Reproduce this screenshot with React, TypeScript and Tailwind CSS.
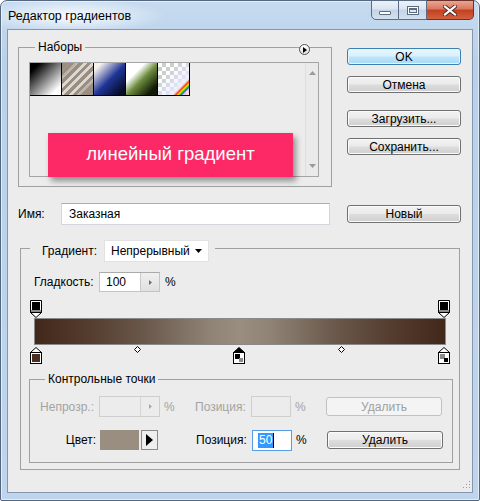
function TopStop({ className }: { className: string }) {
  return (
    <svg width="12" height="18" viewBox="0 0 12 18" className={className}>
      <path d="M0.5 0.5H11.5V12.5L6 17.5L0.5 12.5Z" fill="#fff" stroke="#000" />
      <rect x="2" y="2" width="8" height="8" fill="#000" />
      <rect x="1" y="10" width="10" height="2.5" fill="#8c8c8c" />
      <path d="M0.5 12.5H11.5" stroke="#000" />
    </svg>
  );
}

function BottomStop({
  className,
  selected,
  kind,
}: {
  className: string;
  selected?: boolean;
  kind: "color" | "fg" | "bg";
}) {
  return (
    <svg width="12" height="17" viewBox="0 0 12 17" className={className}>
      <path d="M0.5 5.5L6 0.5L11.5 5.5Z" fill={selected ? "#000" : "#fff"} stroke="#000" />
      <rect x="0.5" y="5.5" width="11" height="11" fill="#fff" stroke="#000" />
      {kind === "color" && <rect x="2" y="7" width="8" height="8" fill="#4a2e1f" />}
      {kind === "fg" && (
        <>
          <rect x="2" y="7" width="5" height="5" fill="#000" />
          <rect x="6" y="11" width="4" height="4" fill="#8c8c8c" />
        </>
      )}
      {kind === "bg" && (
        <>
          <rect x="2" y="7" width="5" height="5" fill="#8c8c8c" />
          <rect x="6" y="11" width="4" height="4" fill="#000" />
        </>
      )}
    </svg>
  );
}

function Diamond({ className }: { className: string }) {
  return (
    <svg width="7" height="7" viewBox="0 0 7 7" className={className}>
      <path d="M3.5 0.5L6.5 3.5L3.5 6.5L0.5 3.5Z" fill="#fff" stroke="#000" />
    </svg>
  );
}

const btn =
  "flex items-center justify-center rounded-[3px] border border-[#707070] bg-[linear-gradient(#f2f2f2_0%,#ebebeb_48%,#dddddd_52%,#cfcfcf_100%)] shadow-[inset_0_0_0_1px_#fbfbfb] text-black";

export default function App() {
  return (
    <div className="w-[480px] h-[501px] font-['Liberation_Sans',Arial,sans-serif] text-[12px] leading-[14px] text-black">
      <div className="w-full h-full flex flex-col rounded-t-[7px] rounded-b-[2px] border border-[#55677f] bg-[linear-gradient(180deg,#c6dbf0,#b9d1ea_60px,#bed5ed)] shadow-[inset_0_0_0_1px_rgba(255,255,255,0.55)]">
        {/* title bar */}
        <div className="h-[28px] flex items-start justify-between bg-[radial-gradient(ellipse_95px_17px_at_70px_15px,rgba(255,255,255,0.9),rgba(255,255,255,0))] rounded-t-[6px]">
          <div className="pl-[7px] pt-[8px] text-[12.5px]">Редактор градиентов</div>
          <div className="flex mr-[5px] -mt-px">
            <div className="w-[28px] h-[20px] rounded-bl-[5px] border border-[#5a6c84] bg-[linear-gradient(#edf2f8_0%,#dbe5f1_45%,#c4d4e7_50%,#d3e0ef_100%)] flex items-end justify-center pb-[4px]">
              <div className="w-[12px] h-[4px] border border-[#5c6c80] bg-white rounded-[1px]" />
            </div>
            <div className="w-[28px] h-[20px] border-y border-r border-[#5a6c84] bg-[linear-gradient(#edf2f8_0%,#dbe5f1_45%,#c4d4e7_50%,#d3e0ef_100%)] flex items-center justify-center">
              <div className="w-[12px] h-[9px] border border-[#5c6c80] bg-white p-[1px]">
                <div className="w-full h-full border border-[#5c6c80] border-t-2 bg-[#dfe7f1]" />
              </div>
            </div>
            <div className="w-[47px] h-[20px] rounded-br-[5px] border-y border-r border-[#6a3328] bg-[linear-gradient(#e9a593_0%,#d9765e_45%,#c4401f_50%,#d3603f_100%)] flex items-center justify-center">
              <svg width="14" height="11" viewBox="0 0 14 11">
                <path d="M2 1.5L12 9.5M12 1.5L2 9.5" stroke="#4a2a24" strokeWidth="4" strokeLinecap="square" />
                <path d="M2 1.5L12 9.5M12 1.5L2 9.5" stroke="#fff" strokeWidth="2.2" strokeLinecap="square" />
              </svg>
            </div>
          </div>
        </div>

        {/* client area */}
        <div className="relative mx-[6px] h-[464px] border border-[#8597ae] bg-[#ececec]">
          <div className="flex pl-[10px] pt-[17px]">
            <div className="w-[314px]">
              {/* Наборы */}
              <div className="relative h-[140px] border border-[#a0a0a0] pl-[10px] pt-[14px]">
                <div className="absolute left-[16px] -top-[8px] bg-[#ececec] px-[3px]">Наборы</div>
                <div className="absolute left-[280px] -top-[4px] w-[11px] h-[11px] rounded-full border border-[#505050] bg-[linear-gradient(#ffffff,#e2e2e2)] flex items-center justify-center">
                  <svg width="5" height="6" viewBox="0 0 5 6" className="ml-px">
                    <path d="M0 0L4 3L0 6Z" fill="#000" />
                  </svg>
                </div>
                <div className="w-[290px] h-[115px] border border-[#a5a5a5] flex">
                  <div className="flex-1">
                    <div className="flex">
                      <div className="w-[32px] h-[33px] border-r border-b border-black bg-[linear-gradient(135deg,#000_15%,#fff_85%)]" />
                      <div className="w-[32px] h-[33px] border-r border-b border-black bg-[linear-gradient(135deg,#9a8e80_10%,rgba(154,142,128,0)_35%,rgba(154,142,128,0)_65%,#9a8e80_90%),repeating-linear-gradient(135deg,#9a8e80_0px,#9a8e80_3px,#dcd8d3_3px,#dcd8d3_6px)]" />
                      <div className="w-[32px] h-[33px] border-r border-b border-black bg-[linear-gradient(135deg,#f8f2ec_12%,#1f3596_52%,#060b26_90%)]" />
                      <div className="w-[32px] h-[33px] border-r border-b border-black bg-[linear-gradient(135deg,#fff_30%,#6e8d3f_52%,#111805_85%)]" />
                      <div className="w-[32px] h-[33px] border-r border-b border-black bg-[linear-gradient(135deg,rgba(255,255,255,0)_30%,rgba(232,236,255,0.9)_74%,#ff3300_79%,#ffee00_82%,#22cc22_85%,#2255ff_88%,rgba(255,190,200,0.6)_90%),conic-gradient(#cdcdcd_25%,#fff_0_50%,#cdcdcd_0_75%,#fff_0)] bg-[length:100%_100%,8px_8px]" />
                    </div>
                  </div>
                  <div className="w-[13px] border-l border-[#dedede] bg-[#eaeaea] flex flex-col items-center justify-between py-[8px]">
                    <svg width="7" height="4" viewBox="0 0 7 4">
                      <path d="M0 4L3.5 0L7 4Z" fill="#9a9a9a" />
                    </svg>
                    <svg width="7" height="4" viewBox="0 0 7 4">
                      <path d="M0 0L3.5 4L7 0Z" fill="#9a9a9a" />
                    </svg>
                  </div>
                </div>
                <div className="absolute left-[29px] top-[85px] w-[245px] h-[44px] bg-[#fd2966] shadow-[3px_4px_6px_rgba(0,0,0,0.4)] flex items-center justify-center text-white text-[18.5px] leading-[22px] pb-[3px]">
                  линейный градиент
                </div>
              </div>

              {/* Имя */}
              <div className="flex items-center mt-[16px]">
                <div className="w-[43px]">Имя:</div>
                <div className="w-[269px] h-[22px] border border-[#d2d6dc] border-t-[#abadb3] bg-white flex items-center pl-[7px]">
                  Заказная
                </div>
              </div>
            </div>

            {/* buttons */}
            <div className="ml-[15px] w-[114px] pt-px flex flex-col">
              <div className="h-[17px] flex items-center justify-center rounded-[3px] border border-[#3c7fb1] bg-[linear-gradient(#eaf6fd_0%,#d9f0fc_48%,#bee6fd_52%,#a7d9f5_100%)] shadow-[inset_0_0_0_1px_#e6f5fd]">
                OK
              </div>
              <div className={`${btn} h-[17px] mt-[11px]`}>Отмена</div>
              <div className={`${btn} h-[17px] mt-[17px]`}>Загрузить...</div>
              <div className={`${btn} h-[17px] mt-[11px]`}>Сохранить...</div>
              <div className={`${btn} h-[18px] mt-[50px]`}>Новый</div>
            </div>
          </div>

          {/* Градиент group */}
          <div className="relative ml-[12px] mt-[23px] w-[440px] h-[222px] border border-[#a0a0a0] pl-[13px] pt-[23px]">
            <div className="absolute left-[9px] -top-[9px] bg-[#ececec] flex items-center pl-[12px] pr-[6px]">
              <div className="w-[62px]">Градиент:</div>
              <div className="w-[105px] h-[22px] border border-[#e2e2e2] bg-white flex items-center justify-between pl-[6px] pr-[6px]">
                <span>Непрерывный</span>
                <svg width="7" height="4" viewBox="0 0 7 4">
                  <path d="M0 0L3.5 4L7 0Z" fill="#000" />
                </svg>
              </div>
            </div>

            {/* Гладкость */}
            <div className="flex items-center h-[20px]">
              <div className="w-[65px]">Гладкость:</div>
              <div className="w-[61px] h-[20px] border border-[#c4c4c4] border-t-[#aaaaaa] flex">
                <div className="w-[40px] bg-white pl-[6px] flex items-center">100</div>
                <div className="flex-1 border-l border-[#c9c9c9] bg-[linear-gradient(#f0f0f0,#e0e0e0)] flex items-center justify-center">
                  <svg width="3" height="5" viewBox="0 0 3 5">
                    <path d="M0 0L3 2.5L0 5Z" fill="#5a6f92" />
                  </svg>
                </div>
              </div>
              <div className="ml-[5px]">%</div>
            </div>

            {/* gradient bar with stops */}
            <div className="relative -ml-[4px] mt-[8px] w-[420px] h-[64px] pt-[18px] pl-[4px]">
              <TopStop className="absolute left-0 top-0" />
              <TopStop className="absolute left-[408px] top-0" />
              <div className="w-[412px] h-[27px] border border-[#8a8a8a] bg-[linear-gradient(90deg,#41281b,#523a2c_12%,#6c5b4e_28%,#8e8274_42%,#9a8e80_50%,#8e8274_58%,#6c5b4e_72%,#523a2c_88%,#41281b)]" />
              <BottomStop className="absolute left-0 top-[47px]" kind="color" />
              <BottomStop className="absolute left-[203px] top-[47px]" kind="fg" selected />
              <BottomStop className="absolute left-[408px] top-[47px]" kind="bg" />
              <Diamond className="absolute left-[104px] top-[46px]" />
              <Diamond className="absolute left-[308px] top-[46px]" />
            </div>

            {/* Контрольные точки */}
            <div className="relative -ml-[5px] mt-[15px] w-[424px] h-[84px] border border-[#a0a0a0] pt-[16px]">
              <div className="absolute left-[15px] -top-[8px] bg-[#ececec] px-[3px]">Контрольные точки</div>

              <div className="flex items-center h-[21px] text-[#a3a3a3]">
                <div className="w-[64px] text-right">Непрозр.:</div>
                <div className="ml-[5px] w-[61px] h-[21px] border border-[#cfcfcf] flex">
                  <div className="w-[40px]" />
                  <div className="flex-1 border-l border-[#d6d6d6] flex items-center justify-center">
                    <svg width="3" height="5" viewBox="0 0 3 5">
                      <path d="M0 0L3 2.5L0 5Z" fill="#a8a8a8" />
                    </svg>
                  </div>
                </div>
                <div className="w-[35px] pl-[4px]">%</div>
                <div className="w-[56px]">Позиция:</div>
                <div className="w-[40px] h-[21px] border border-[#cfcfcf]" />
                <div className="w-[35px] pl-[4px]">%</div>
                <div className="w-[116px] h-[19px] rounded-[3px] border border-[#bfc2c4] bg-[#f4f4f4] flex items-center justify-center text-[#a0a0a0]">
                  Удалить
                </div>
              </div>

              <div className="flex items-center h-[20px] mt-[13px]">
                <div className="w-[66px] text-right">Цвет:</div>
                <div className="ml-[4px] w-[39px] h-[20px] bg-[#9a8e80]" />
                <div className="ml-[2px] w-[17px] h-[20px] border border-[#8a8a8a] bg-[#eeeeee] flex items-center justify-center">
                  <svg width="7" height="12" viewBox="0 0 7 12">
                    <path d="M0 0L7 6L0 12Z" fill="#000" />
                  </svg>
                </div>
                <div className="w-[38px]" />
                <div className="w-[56px]">Позиция:</div>
                <div className="w-[40px] h-[21px] border border-[#569de5] bg-white flex items-center pl-[5px]">
                  <span className="bg-[#3399ff] text-white px-px leading-[15px]">50</span>
                  <span className="w-px h-[15px] bg-black" />
                </div>
                <div className="w-[35px] pl-[4px]">%</div>
                <div className={`${btn} w-[116px] h-[18px]`}>Удалить</div>
              </div>
            </div>
          </div>

          {/* resize grip */}
          <svg width="10" height="10" viewBox="0 0 10 10" className="absolute right-[1px] bottom-[1px]">
            <rect x="8" y="0" width="1" height="1" fill="#9a9a9a" />
            <rect x="5" y="3" width="1" height="1" fill="#9a9a9a" />
            <rect x="8" y="3" width="1" height="1" fill="#9a9a9a" />
            <rect x="2" y="6" width="1" height="1" fill="#9a9a9a" />
            <rect x="5" y="6" width="1" height="1" fill="#9a9a9a" />
            <rect x="8" y="6" width="1" height="1" fill="#9a9a9a" />
          </svg>
        </div>
      </div>
    </div>
  );
}
